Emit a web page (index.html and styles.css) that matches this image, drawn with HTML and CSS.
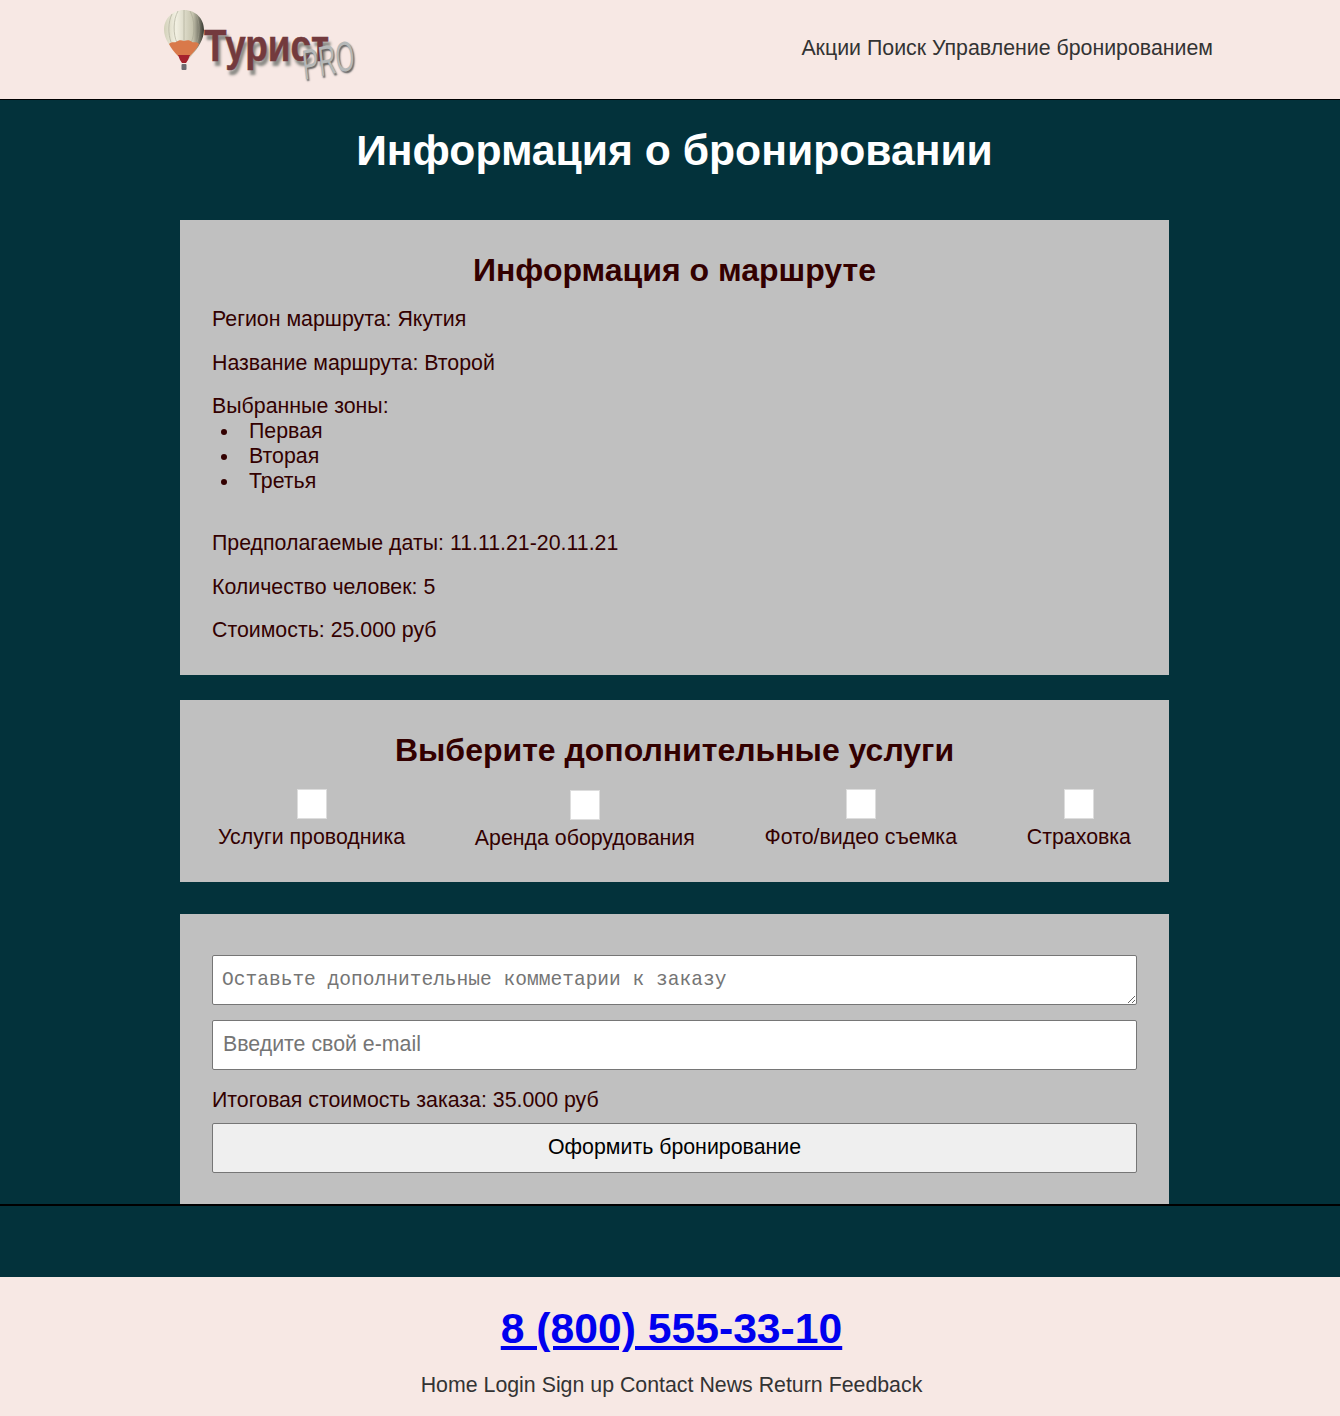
FILE: index.html
```html
<!DOCTYPE html>
<html lang="ru">
<head>
  <meta charset="UTF-8">
  <meta name="viewport" content="width=device-width, initial-scale=1.0">
  <title>Информация о бронировании</title>
  <link rel="stylesheet" href="styles.css">
</head>
<body>
  <!-- Шапка -->
  <header class="top">
    <a class="logo" href="#">
      <svg class="balloon" width="40" height="61" viewBox="0 0 40 61">
        <defs>
          <linearGradient id="shell" x1="0" x2="1" y1="0" y2="0">
            <stop offset="0" stop-color="#d3d1ba"/>
            <stop offset="0.3" stop-color="#f2f0e2"/>
            <stop offset="0.72" stop-color="#c6c4ae"/>
            <stop offset="0.9" stop-color="#6d6c5f"/>
            <stop offset="1" stop-color="#35372f"/>
          </linearGradient>
        </defs>
        <path d="M20 0C8 0 0 9 0 20c0 9 7 18 13 25l4 5h7l4-5c6-7 12-16 12-25C40 9 32 0 20 0z" fill="url(#shell)"/>
        <g fill="none" stroke="#a5a391" stroke-width="0.8" opacity="0.7">
          <path d="M14 1C9 10 9 24 13 33"/>
          <path d="M20 0v33"/>
          <path d="M26 1c5 9 5 23 1 32"/>
          <path d="M8 4C4 12 4 24 7 32"/>
          <path d="M32 4c4 8 4 20 1 28"/>
        </g>
        <path d="M5 34c3-3 5-1 7-2 3-2 5-2 8-1 3-1 6-1 8 1 2 1 4-1 7 2-2 4-5 8-9 12H14C10 42 7 38 5 34z" fill="#d9794a"/>
        <path d="M14 45h12l-2 5-2 3h-4l-2-3z" fill="#a5222d"/>
        <rect x="17.500" y="54" width="5" height="6" rx="1" fill="#6d6a70"/>
      </svg>
      <span class="logo-name">Турист</span>
      <span class="logo-pro">PRO</span>
    </a>
    <nav class="top-nav">
      <a href="#">Акции</a>
      <a href="#">Поиск</a>
      <a href="#">Управление бронированием</a>
    </nav>
  </header>

  <main class="page">
    <h1>Информация о бронировании</h1>

    <section class="card card-route">
      <h2>Информация о маршруте</h2>
      <p>Регион маршрута: Якутия</p>
      <p>Название маршрута: Второй</p>
      <div class="zones">
        Выбранные зоны:
        <ul>
          <li>Первая</li>
          <li>Вторая</li>
          <li>Третья</li>
        </ul>
      </div>
      <p>Предполагаемые даты: 11.11.21-20.11.21</p>
      <p>Количество человек: 5</p>
      <p>Стоимость: 25.000 руб</p>
    </section>

    <section class="card card-extras">
      <h2>Выберите дополнительные услуги</h2>
      <div class="extras">
        <label class="extra"><input type="checkbox"><span>Услуги проводника</span></label>
        <label class="extra extra-low"><input type="checkbox"><span>Аренда оборудования</span></label>
        <label class="extra"><input type="checkbox"><span>Фото/видео съемка</span></label>
        <label class="extra"><input type="checkbox"><span>Страховка</span></label>
      </div>
    </section>

    <section class="card card-order">
      <textarea class="field comment" placeholder="Оставьте дополнительные комметарии к заказу"></textarea>
      <input class="field email" type="text" placeholder="Введите свой e-mail">
      <p class="total">Итоговая стоимость заказа: 35.000 руб</p>
      <button class="submit">Оформить бронирование</button>
    </section>
  </main>

  <footer class="bottom">
    <div class="bottom-gap"></div>
    <div class="bottom-info">
      <a class="phone" href="#">8 (800) 555-33-10</a>
      <nav class="bottom-nav">
        <a href="#">Home</a>
        <a href="#">Login</a>
        <a href="#">Sign up</a>
        <a href="#">Contact</a>
        <a href="#">News</a>
        <a href="#">Return</a>
        <a href="#">Feedback</a>
      </nav>
    </div>
  </footer>
</body>
</html>
```

FILE: styles.css
```css
body {
  margin: 0;
  font-family: "Liberation Sans", Arial, sans-serif;
  font-size: 21.33px;
  background: #03323b;
  color: #330000;
}

/* Шапка */
.top {
  height: 99px;
  background: #f7e8e4;
  border-bottom: 1px solid #000;
  display: flex;
  justify-content: space-between;
  align-items: center;
  padding: 0 127px 0 164px;
}

.top-nav a,
.bottom-nav a {
  color: #333;
  text-decoration: none;
}

.top-nav {
  margin-top: -3px;
}

.logo {
  position: relative;
  display: block;
  width: 200px;
  height: 99px;
  text-decoration: none;
}

.balloon {
  position: absolute;
  left: 0;
  top: 10px;
}

.logo-name {
  position: absolute;
  left: 40px;
  top: 23px;
  font-size: 45px;
  line-height: 45px;
  font-weight: bold;
  color: #733a3d;
  -webkit-text-stroke: 0.5px #733a3d;
  text-shadow: 3px 5px 3px #8a8a85;
  transform: scaleX(0.82);
  transform-origin: left top;
}

.logo-pro {
  position: absolute;
  left: 140px;
  top: 45px;
  font-size: 42px;
  line-height: 42px;
  color: #b5b8b8;
  text-shadow: 2px 2px 2px #666;
  transform: rotate(-12deg) skewX(-6deg) scaleX(0.58);
  transform-origin: 0 35px;
}

/* Основная часть */
.page {
  width: 989px;
  margin-left: 180px;
  height: 1104px;
  display: flow-root;
}

h1 {
  margin: 25px 0 45px;
  font-size: 42.67px;
  line-height: 50px;
  color: #fff;
  text-align: center;
}

.card {
  background: #c0c0c0;
  padding: 0 32px;
  overflow: hidden;
}

h2 {
  margin: 32px 0 0;
  font-size: 32px;
  line-height: 37px;
  text-align: center;
}

.card p {
  margin: 0;
  line-height: 24.5px;
}

.card-route {
  height: 455px;
}

.card-route h2 + p {
  margin-top: 18px;
}

.card-route p + p {
  margin-top: 19px;
}

.zones {
  margin-top: 19px;
  line-height: 25px;
}

.zones ul {
  margin: 0 0 37px;
  padding: 0;
  list-style: none;
}

.zones li {
  display: flex;
  align-items: center;
  padding-left: 9px;
}

.zones li::before {
  content: "";
  width: 6px;
  height: 6px;
  margin-right: 22px;
  border-radius: 50%;
  background: #330000;
}

.card-extras {
  height: 182px;
  margin-top: 25px;
}

.extras {
  display: flex;
  justify-content: space-between;
  margin: 20px 6px 0;
}

.extra {
  display: flex;
  flex-direction: column;
  align-items: center;
  gap: 6px;
  line-height: 24px;
}

.extra-low {
  margin-top: 1px;
}

.extra input {
  appearance: none;
  width: 30px;
  height: 30px;
  margin: 0;
  background: #fff;
  border: 1px solid #ddd;
  border-radius: 0;
}

.card-order {
  height: 290px;
  margin-top: 32px;
  display: flex;
  flex-direction: column;
}

.field {
  box-sizing: border-box;
  width: 100%;
  height: 50px;
  background: #fff;
  border: 1px solid #767676;
  border-radius: 2px;
  color: #333;
  margin: 0;
}

.field::placeholder {
  color: #757575;
}

.comment {
  display: block;
  margin-top: 41px;
  padding: 12px 9px 10px;
  font-family: "Liberation Mono", monospace;
  font-size: 19.56px;
  line-height: 25px;
}

.email {
  margin-top: 15px;
  padding: 0 10px 2px;
  font-family: inherit;
  font-size: 21.33px;
}

.card .total {
  margin-top: 18px;
  line-height: 24px;
}

.submit {
  height: 50px;
  margin-top: 11px;
  padding: 0 0 2px;
  background: #efefef;
  border: 1px solid #767676;
  border-radius: 2px;
  color: #000;
  font-family: inherit;
  font-size: 21.33px;
}

/* Подвал */
.bottom {
  border-top: 2px solid #000;
}

.bottom-gap {
  height: 71px;
}

.bottom-info {
  height: 139px;
  background: #f7e8e4;
  padding-left: 3px;
  text-align: center;
}

.phone {
  display: block;
  padding-top: 27px;
  font-size: 42.67px;
  line-height: 48px;
  font-weight: bold;
  color: #0000ee;
}

.bottom-nav {
  margin-top: 22px;
  line-height: 23px;
}
```
